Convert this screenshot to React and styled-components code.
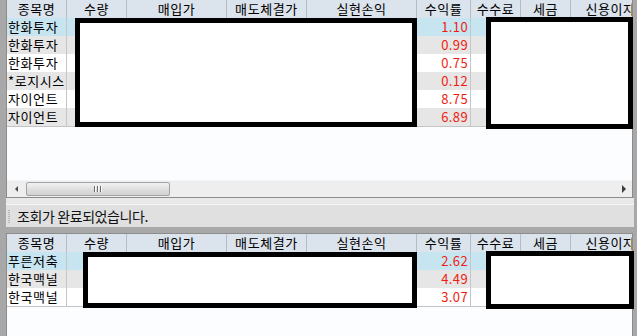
import React from 'react';
import styled, { createGlobalStyle } from 'styled-components';

const Global = createGlobalStyle`
  html, body { margin: 0; padding: 0; background: #a8a8a8; }
  body {
    width: 637px; height: 336px; overflow: hidden;
    font-family: "Noto Sans CJK KR", "Noto Sans", sans-serif;
  }
`;

const COLS = '60px 60px 100px 80px 110px 54px 50px 50px 80px';

const Frame = styled.div`
  position: relative;
  width: 637px;
  height: 336px;
  box-sizing: border-box;
  padding: 0 4px 0 6px;
  background: #a8a8a8;
  display: flex;
  flex-direction: column;
`;

const Panel = styled.section`
  display: flex;
  flex-direction: column;
  box-sizing: border-box;
  background: #fcfdff;
  border-left: 1px solid #8c8c8c;
  border-right: 1px solid #8c8c8c;
  border-top: ${p => (p.$top ? '1px solid #8c8c8c' : 'none')};
  border-bottom: ${p => (p.$bottom ? '1px solid #8c8c8c' : 'none')};
  height: ${p => p.$h}px;
  overflow: hidden;
`;

const GridArea = styled.div`
  flex: 1;
  overflow: hidden;
  background: #fcfdff;
`;

const Row = styled.div`
  display: grid;
  grid-template-columns: ${COLS};
  width: max-content;
  height: 18px;
  background: ${p => (p.$tone === 'sel' ? '#c6e5f1' : p.$tone === 'alt' ? '#e6e6e6' : '#ffffff')};
`;

const HeadRow = styled(Row)`
  background: #dbe3ec;
  height: 18px;
`;

const HeadCell = styled.div`
  box-sizing: border-box;
  border-right: 1px solid #b6bdc6;
  font-size: 13px;
  letter-spacing: 0.6px;
  line-height: 18px;
  text-align: center;
  color: #000;
  white-space: nowrap;
  overflow: hidden;
`;

const Cell = styled.div`
  box-sizing: border-box;
  border-right: 1px solid #c6c6c6;
  font-size: 13px;
  letter-spacing: ${p => (p.$num ? '0.4px' : '0.6px')};
  line-height: 18px;
  white-space: nowrap;
  overflow: hidden;
  padding: ${p => (p.$num ? '0 2px 0 0' : '0 0 0 1px')};
  text-align: ${p => (p.$num ? 'right' : 'left')};
  color: ${p => (p.$num ? '#f01c10' : '#000')};
`;

const Body = styled.div`
  width: max-content;
  border-bottom: 1px solid #c4c4c4;
`;

const HScroll = styled.div`
  height: 16px;
  display: flex;
  align-items: center;
  background: #eeeeee;
  border-top: 1px solid #f4f4f4;
`;

const ArrowBtn = styled.div`
  width: 16px;
  height: 15px;
  display: flex;
  align-items: center;
  justify-content: center;
  flex: none;
`;

const ArrowLeft = styled.span`
  width: 0; height: 0;
  border-top: 3px solid transparent;
  border-bottom: 3px solid transparent;
  border-right: 3px solid #4a4a4a;
  margin-left: 2px;
`;

const ArrowRight = styled.span`
  width: 0; height: 0;
  border-top: 4px solid transparent;
  border-bottom: 4px solid transparent;
  border-left: 4px solid #3c3c3c;
`;

const Thumb = styled.div`
  margin-left: 3px;
  width: 144px;
  height: 14px;
  box-sizing: border-box;
  border: 1px solid #a2a2a2;
  border-radius: 2px;
  background: linear-gradient(#f2f2f2, #dcdcdc 60%, #d2d2d2);
  display: flex;
  align-items: center;
  justify-content: center;
  gap: 1px;
  flex: none;
`;

const Grip = styled.span`
  width: 1px;
  height: 6px;
  background: #6a6a6a;
  box-shadow: 1px 0 0 #fafafa;
  margin-right: 1px;
`;

const Spacer = styled.div`
  flex: 1;
`;

const Gap = styled.div`
  flex: none;
  height: 6px;
`;

const StatusBar = styled.div`
  height: 29px;
  box-sizing: border-box;
  border-top: 6px solid #e9e9e9;
  box-shadow: inset 0 1px 0 #f6f6f6;
  background: #e0e0e0;
  display: flex;
  align-items: center;
  padding-left: 2px;
  margin-right: -1px;
`;

const Gripper = styled.span`
  width: 2px;
  height: 13px;
  margin-top: 1px;
  background-image: linear-gradient(#b4b4b4 50%, transparent 50%);
  background-size: 2px 2px;
  margin-right: 7px;
`;

const StatusText = styled.span`
  font-size: 14px;
  color: #111;
  letter-spacing: -0.4px;
`;

const Mask = styled.div`
  position: absolute;
  box-sizing: border-box;
  border: 5px solid #000;
  background: #fff;
`;

const headers = ['종목명', '수량', '매입가', '매도체결가', '실현손익', '수익률', '수수료', '세금', '신용이자'];

const top = [
  ['한화투자', '1.10'],
  ['한화투자', '0.99'],
  ['한화투자', '0.75'],
  ['*로지시스', '0.12'],
  ['자이언트', '8.75'],
  ['자이언트', '6.89'],
];

const bottom = [
  ['푸른저축', '2.62'],
  ['한국맥널', '4.49'],
  ['한국맥널', '3.07'],
];

const tone = i => (i === 0 ? 'sel' : i % 2 === 1 ? 'alt' : 'plain');

function Table({ rows }) {
  return (
    <>
      <HeadRow>
        {headers.map(h => (
          <HeadCell key={h}>{h}</HeadCell>
        ))}
      </HeadRow>
      <Body>
        {rows.map(([name, rate], i) => (
          <Row key={i} $tone={tone(i)}>
            <Cell>{name}</Cell>
            <Cell />
            <Cell />
            <Cell />
            <Cell />
            <Cell $num>{rate}</Cell>
            <Cell />
            <Cell />
            <Cell />
          </Row>
        ))}
      </Body>
    </>
  );
}

export default function App() {
  return (
    <Frame>
      <Global />
      <Panel $h={198} $bottom>
        <GridArea>
          <Table rows={top} />
        </GridArea>
        <HScroll>
          <ArrowBtn><ArrowLeft /></ArrowBtn>
          <Thumb><Grip /><Grip /><Grip /></Thumb>
          <Spacer />
          <ArrowBtn><ArrowRight /></ArrowBtn>
        </HScroll>
      </Panel>
      <StatusBar>
        <Gripper />
        <StatusText>조회가 완료되었습니다.</StatusText>
      </StatusBar>
      <Gap />
      <Panel $h={103} $top>
        <GridArea>
          <Table rows={bottom} />
        </GridArea>
      </Panel>

      <Mask style={{ left: 75, top: 18, width: 342, height: 109 }} />
      <Mask style={{ left: 486, top: 17, width: 147, height: 112 }} />
      <Mask style={{ left: 83, top: 252, width: 334, height: 56 }} />
      <Mask style={{ left: 486, top: 251, width: 148, height: 58 }} />
    </Frame>
  );
}
